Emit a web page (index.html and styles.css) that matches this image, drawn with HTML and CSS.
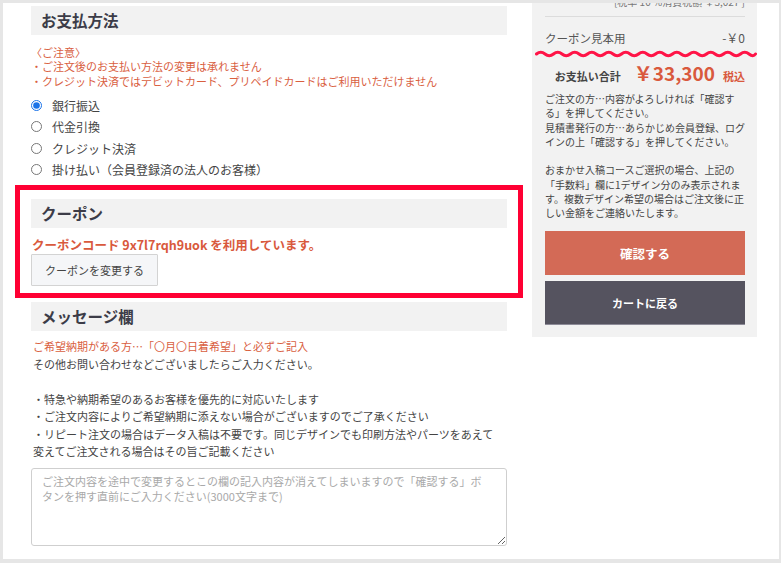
FILE: index.html
```html
<!DOCTYPE html>
<html lang="ja">
<head>
<meta charset="utf-8">
<title>ご注文手続き</title>
<link rel="stylesheet" href="styles.css">
</head>
<body>
<div class="frame">
  <main class="main">
    <section class="sec">
      <h2 class="sec-head">お支払方法</h2>
      <div class="notes">〈ご注意〉<br>・ご注文後のお支払い方法の変更は承れません<br>・クレジット決済ではデビットカード、プリペイドカードはご利用いただけません</div>
      <ul class="radios">
        <li><label class="radio"><input type="radio" name="pay" checked><span>銀行振込</span></label></li>
        <li><label class="radio"><input type="radio" name="pay"><span>代金引換</span></label></li>
        <li><label class="radio"><input type="radio" name="pay"><span>クレジット決済</span></label></li>
        <li><label class="radio"><input type="radio" name="pay"><span>掛け払い（会員登録済の法人のお客様）</span></label></li>
      </ul>
    </section>

    <section class="sec coupon">
      <h2 class="sec-head">クーポン</h2>
      <p class="coupon-msg">クーポンコード 9x7l7rqh9uok を利用しています。</p>
      <button class="btn-change" type="button">クーポンを変更する</button>
    </section>

    <section class="sec">
      <h2 class="sec-head">メッセージ欄</h2>
      <div class="msg-text"><span class="accent">ご希望納期がある方…「〇月〇日着希望」と必ずご記入</span><br>その他お問い合わせなどございましたらご入力ください。<br><br>・特急や納期希望のあるお客様を優先的に対応いたします<br>・ご注文内容によりご希望納期に添えない場合がございますのでご了承ください<br>・リピート注文の場合はデータ入稿は不要です。同じデザインでも印刷方法やパーツをあえて<br>変えてご注文される場合はその旨ご記載ください</div>
      <textarea class="msg-box" placeholder="ご注文内容を途中で変更するとこの欄の記入内容が消えてしまいますので「確認する」ボタンを押す直前にご入力ください(3000文字まで)"></textarea>
    </section>
  </main>

  <aside class="summary">
    <div class="tax-line">[税率 10 %消費税額 ￥3,027 ]</div>
    <div class="coupon-row"><span>クーポン見本用</span><span class="coupon-val">-￥0</span></div>
    <svg class="wave" width="222" height="8" viewBox="0 0 222 8" aria-hidden="true"><path d="M1.5 4 Q5.75 0.5 10 4 T18.5 4 T27 4 T35.5 4 T44 4 T52.5 4 T61 4 T69.5 4 T78 4 T86.5 4 T95 4 T103.5 4 T112 4 T120.5 4 T129 4 T137.5 4 T146 4 T154.5 4 T163 4 T171.5 4 T180 4 T188.5 4 T197 4 T205.5 4 T214 4 T220.5 4" fill="none" stroke="#ff1447" stroke-width="3" stroke-linecap="round"/></svg>
    <div class="total-row"><span class="total-label">お支払い合計</span><span class="total-price">￥33,300</span><span class="total-tax">税込</span></div>
    <p class="guide">ご注文の方…内容がよろしければ「確認す<br>る」を押してください。<br>見積書発行の方…あらかじめ会員登録、ログ<br>インの上「確認する」を押してください。<br><br>おまかせ入稿コースご選択の場合、上記の<br>「手数料」欄に1デザイン分のみ表示されま<br>す。複数デザイン希望の場合はご注文後に正<br>しい金額をご連絡いたします。</p>
    <button class="btn btn-confirm" type="button">確認する</button>
    <button class="btn btn-back" type="button">カートに戻る</button>
  </aside>
</div>
</body>
</html>
```

FILE: styles.css
```css
html, body {
  margin: 0;
  padding: 0;
}
body {
  background: #e6e6e6;
  font-family: "Noto Sans CJK JP", "Noto Sans", sans-serif;
  color: #444;
}
.frame {
  margin: 3px 2px 0 3px;
  height: 556px;
  background: #fff;
  display: flex;
  align-items: flex-start;
  padding-left: 28px;
  box-sizing: border-box;
  overflow: hidden;
}

/* main column */
.main {
  width: 476px;
  flex: none;
  padding-top: 3px;
}
.sec-head {
  margin: 0;
  height: 29px;
  line-height: 29px;
  padding: 0 10px;
  background: #f2f2f2;
  font-size: 15.5px;
  font-weight: bold;
  color: #3c3c48;
}
.notes {
  margin-top: 9.75px;
  font-size: 11px;
  line-height: 14.5px;
  color: #d9603f;
}
.radios {
  list-style: none;
  margin: 6px 0 0;
  padding: 0;
}
.radios li {
  height: 21.5px;
  display: flex;
  align-items: center;
}
.radio {
  display: flex;
  align-items: center;
  font-size: 12px;
  color: #444;
}
.radio input {
  width: 11px;
  height: 11px;
  margin: 0 10px 0 0;
  accent-color: #1a73e8;
}

.coupon {
  position: relative;
  margin-top: 18.75px;
}
.coupon::before {
  content: "";
  position: absolute;
  left: -16px;
  right: -16px;
  top: -14px;
  bottom: -12px;
  border: 5px solid #ff0033;
  pointer-events: none;
}
.coupon-msg {
  margin: 8px 0 0 1px;
  font-size: 12.5px;
  line-height: 17px;
  font-weight: bold;
  color: #d9593d;
}
.btn-change {
  display: block;
  margin-top: 1px;
  height: 32px;
  padding: 0 13px;
  background: #f5f6f8;
  border: 1px solid #d3d3d3;
  border-radius: 1px;
  font-family: inherit;
  font-size: 11px;
  color: #444;
}

.coupon + .sec {
  margin-top: 16px;
}
.msg-text {
  margin-top: 7.25px;
  padding-left: 2px;
  font-size: 11px;
  line-height: 17.5px;
  color: #444;
}
.accent {
  color: #d9603f;
}
.msg-box {
  display: block;
  margin-top: 7.25px;
  width: 100%;
  height: 78px;
  box-sizing: border-box;
  border: 1px solid #cfcfcf;
  border-radius: 3px;
  padding: 5px 20px 5px 10px;
  font-family: inherit;
  font-size: 11px;
  line-height: 15px;
  color: #444;
  resize: vertical;
}
.msg-box::placeholder {
  color: #a9a9a9;
}

/* summary column */
.summary {
  position: relative;
  flex: none;
  width: 225px;
  margin-left: 25px;
  padding: 0 12px 12px 13px;
  box-sizing: border-box;
  background: #f2f2f2;
}
.tax-line {
  margin-top: -8px;
  font-size: 10px;
  line-height: 14px;
  text-align: right;
  color: #777;
  padding-bottom: 7px;
  border-bottom: 1px solid #dcdcdc;
}
.coupon-row {
  display: flex;
  justify-content: space-between;
  margin-top: 13px;
  line-height: 16px;
  font-size: 11.5px;
  color: #555;
}
.coupon-val {
  font-size: 12px;
}
.wave {
  position: absolute;
  left: 3px;
  top: 47px;
}
.total-row {
  display: flex;
  align-items: baseline;
  justify-content: flex-end;
  margin-top: 14px;
  height: 26px;
  line-height: 26px;
}
.total-label {
  font-size: 11px;
  font-weight: bold;
  color: #444;
  margin-right: 13px;
}
.total-price {
  font-size: 19px;
  font-weight: bold;
  color: #d9593d;
}
.total-tax {
  font-size: 11px;
  font-weight: bold;
  color: #d9593d;
  margin-left: 8px;
}
.guide {
  margin: 6px 0 0;
  font-size: 10px;
  line-height: 14.3px;
  white-space: nowrap;
  color: #444;
}
.btn {
  display: block;
  width: 100%;
  height: 44px;
  border: 0;
  padding: 0;
  color: #fff;
  font-family: inherit;
  font-weight: bold;
}
.btn-confirm {
  margin-top: 10.5px;
  background: #d36a56;
  font-size: 12.5px;
}
.btn-back {
  margin-top: 6px;
  background: #55535f;
  border-bottom: 1px solid #8d8b98;
  font-size: 11px;
}
```
